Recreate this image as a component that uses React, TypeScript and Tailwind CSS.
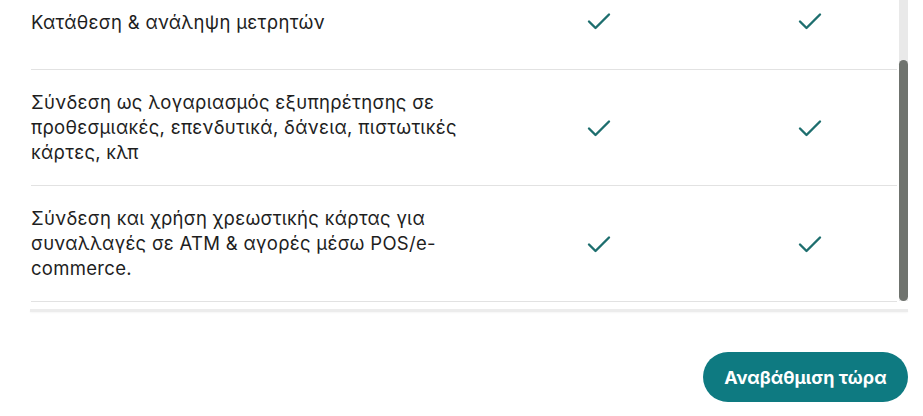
import React from "react";

const Check = () => (
  <svg width="24" height="18" viewBox="0 0 24 18" fill="none">
    <path d="M2 9.5 L8.5 16 L22 2.5" stroke="#1d6e6e" strokeWidth="2.4" strokeLinecap="round" strokeLinejoin="round" />
  </svg>
);

const Row = ({ lines, first }: { lines: string[]; first?: boolean }) => (
  <div className={`grid grid-cols-[462px_211px_211px] items-center border-b border-[#e2e2e2] ${first ? "pb-[23px]" : "py-5"}`}>
    <div className={`min-h-[48px] flex items-center text-[18.5px] tracking-[0.3px] leading-[25px] text-[#1e1e1e] ${first ? "-mt-[2px]" : ""}`}>
      <div>
        {lines.map((l, i) => (
          <div key={i}>{l}</div>
        ))}
      </div>
    </div>
    <div className={`flex justify-center ${first ? "-mt-[4px]" : ""}`}><Check /></div>
    <div className={`flex justify-center ${first ? "-mt-[4px]" : ""}`}><Check /></div>
  </div>
);

export default function App() {
  return (
    <div className="w-[923px] h-[416px] bg-white overflow-hidden" style={{ fontFamily: "Inter, 'Noto Sans', sans-serif" }}>
      <div className="flex h-[302px]">
        <div className="flex-1 pl-[31px] pr-[2px] overflow-hidden">
          <Row first lines={["Κατάθεση & ανάληψη μετρητών"]} />
          <Row lines={["Σύνδεση ως λογαριασμός εξυπηρέτησης σε", "προθεσμιακές, επενδυτικά, δάνεια, πιστωτικές", "κάρτες, κλπ"]} />
          <Row lines={["Σύνδεση και χρήση χρεωστικής κάρτας για", "συναλλαγές σε ATM & αγορές μέσω POS/e-", "commerce."]} />
        </div>
        <div className="w-[9px] mr-[15px] h-[301px] bg-[#e9e9e9] flex flex-col">
          <div className="mt-[60px] flex-1 rounded-full bg-[#6f736e]" />
        </div>
      </div>
      <div className="ml-[30px] mr-[15px] mt-[7px] h-[3px] bg-[#ececec] shadow-[0_1px_2px_rgba(0,0,0,0.04)]" />
      <div className="flex justify-end pr-[15px] mt-[40px]">
        <button className="w-[205px] h-[50px] rounded-full bg-[#0e7a81] text-white text-[18px] font-bold">
          Αναβάθμιση τώρα
        </button>
      </div>
    </div>
  );
}
